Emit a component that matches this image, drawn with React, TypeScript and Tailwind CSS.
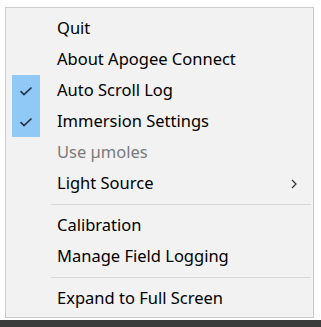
import React from "react"

type Item =
  | { kind: "item"; label: string; checked?: boolean; disabled?: boolean; submenu?: boolean }
  | { kind: "sep" }

const items: Item[] = [
  { kind: "item", label: "Quit" },
  { kind: "item", label: "About Apogee Connect" },
  { kind: "item", label: "Auto Scroll Log", checked: true },
  { kind: "item", label: "Immersion Settings", checked: true },
  { kind: "item", label: "Use µmoles", disabled: true },
  { kind: "item", label: "Light Source", submenu: true },
  { kind: "sep" },
  { kind: "item", label: "Calibration" },
  { kind: "item", label: "Manage Field Logging" },
  { kind: "sep" },
  { kind: "item", label: "Expand to Full Screen" },
]

function Check() {
  return (
    <svg width="14" height="10" viewBox="0 0 14 10" fill="none">
      <path d="M1.5 5.2 L5 8.5 L12.5 1.5" stroke="#243448" strokeWidth="1.7" />
    </svg>
  )
}

function Chevron() {
  return (
    <svg width="6" height="10" viewBox="0 0 6 10" fill="none">
      <path d="M1 1 L5 5 L1 9" stroke="#333" strokeWidth="1.2" />
    </svg>
  )
}

export default function App() {
  return (
    <div
      className="w-[321px] h-[327px] bg-white flex flex-col overflow-hidden"
      style={{ fontFamily: '"Noto Sans", "Open Sans", sans-serif' }}
    >
      <div className="pt-[7px] pl-[5px]">
        <div className="w-[309px] border border-[#cccccc] bg-[#f2f2f2] pt-[5px] pb-[3px]">
          {items.map((it, i) =>
            it.kind === "sep" ? (
              <div key={i} className="h-[11px] flex items-center pl-[45px] pr-[2px]">
                <div className="h-px w-full bg-[#d7d7d7]" />
              </div>
            ) : (
              <div key={i} className="h-[31px] flex items-center">
                <div className="w-[51px] h-full flex items-center pl-[6px]">
                  {it.checked && (
                    <div className="w-[28px] h-full bg-[#90c8f6] flex items-center justify-center">
                      <Check />
                    </div>
                  )}
                </div>
                <span
                  className={
                    "flex-1 text-[16.5px] leading-none " +
                    (it.disabled ? "text-[#7a7a7a]" : "text-black")
                  }
                >
                  {it.label}
                </span>
                {it.submenu && (
                  <div className="pr-[16px] flex items-center">
                    <Chevron />
                  </div>
                )}
              </div>
            )
          )}
        </div>
      </div>
      <div className="mt-[2px] flex-1 bg-[#3b3b3b]" />
    </div>
  )
}
